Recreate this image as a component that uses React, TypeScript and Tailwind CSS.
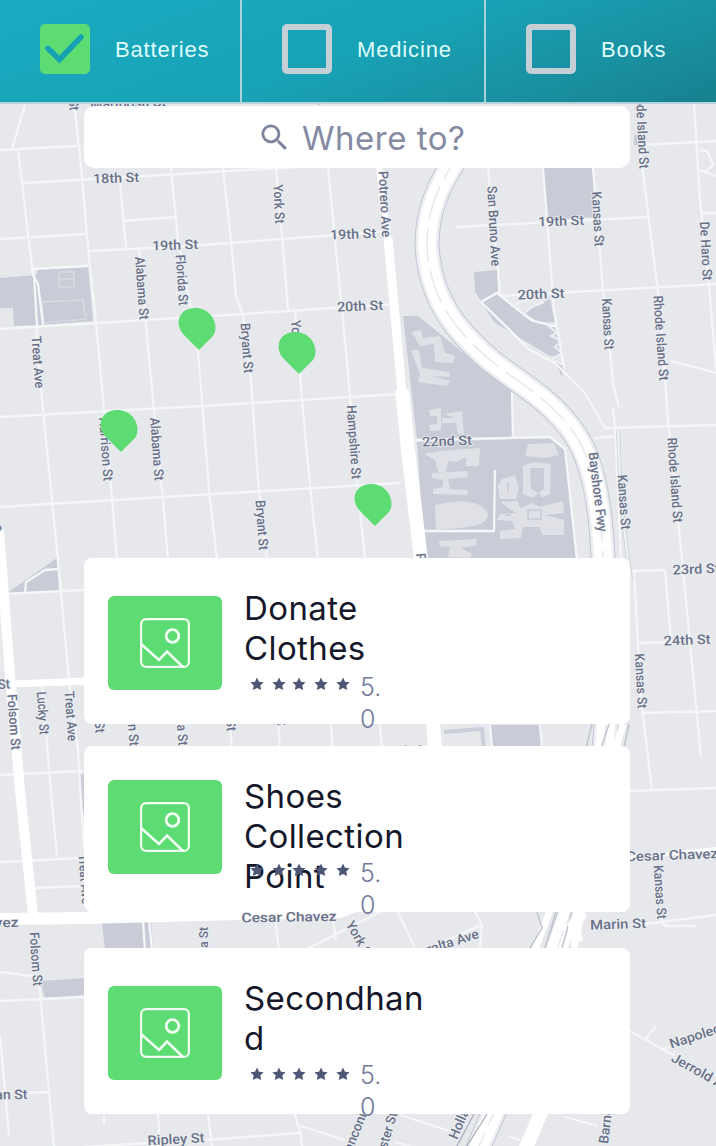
import React from 'react';
import { MdSearch } from 'react-icons/md';

type Label = { t: string; x: number; y: number; r: number; w: number };

const labels: Label[] = [
  { t: 'Mariposa St', x: 128, y: 103, r: -2, w: 76 },
  { t: 'St', x: 74, y: 105, r: 87, w: 11 },
  { t: 'York St', x: 322, y: 85, r: 87, w: 39 },
  { t: '18th St', x: 116, y: 178, r: -2, w: 46 },
  { t: '19th St', x: 175, y: 245, r: -2, w: 46 },
  { t: '19th St', x: 353, y: 234, r: -2, w: 46 },
  { t: '20th St', x: 360, y: 306, r: -2, w: 46 },
  { t: '19th St', x: 561, y: 221, r: -2, w: 46 },
  { t: '20th St', x: 541, y: 294, r: -2, w: 47 },
  { t: '22nd St', x: 447, y: 441, r: -2, w: 50 },
  { t: 'York St', x: 279, y: 204, r: 87, w: 39 },
  { t: 'Potrero Ave', x: 385, y: 204, r: 87, w: 66 },
  { t: 'Florida St', x: 182, y: 280, r: 86, w: 51 },
  { t: 'Alabama St', x: 142, y: 288, r: 86, w: 63 },
  { t: 'Treat Ave', x: 38, y: 362, r: 86, w: 52 },
  { t: 'Bryant St', x: 247, y: 348, r: 86, w: 50 },
  { t: 'York St', x: 297, y: 340, r: 86, w: 40 },
  { t: 'Harrison St', x: 106, y: 449, r: 86, w: 64 },
  { t: 'Alabama St', x: 157, y: 449, r: 86, w: 63 },
  { t: 'Hampshire St', x: 354, y: 442, r: 86, w: 74 },
  { t: 'Bryant St', x: 262, y: 525, r: 86, w: 50 },
  { t: 'Potrero Ave', x: 423, y: 586, r: 86, w: 66 },
  { t: 'San Bruno Ave', x: 494, y: 226, r: 87, w: 80 },
  { t: 'Kansas St', x: 598, y: 219, r: 87, w: 55 },
  { t: 'Kansas St', x: 608, y: 324, r: 87, w: 51 },
  { t: 'Rhode Island St', x: 661, y: 338, r: 86, w: 85 },
  { t: 'Rhode Island St', x: 675, y: 480, r: 86, w: 85 },
  { t: 'Rhode Island St', x: 642, y: 126, r: 87, w: 85 },
  { t: 'De Haro St', x: 706, y: 251, r: 87, w: 59 },
  { t: 'Kansas St', x: 624, y: 502, r: 86, w: 55 },
  { t: 'Bayshore Fwy', x: 598, y: 492, r: 83, w: 80 },
  { t: '23rd St', x: 696, y: 569, r: -2, w: 47 },
  { t: '24th St', x: 687, y: 640, r: -2, w: 47 },
  { t: 'Kansas St', x: 641, y: 681, r: 87, w: 55 },
  { t: 'Cesar Chavez', x: 672, y: 855, r: -2, w: 92 },
  { t: 'Kansas St', x: 660, y: 892, r: 86, w: 54 },
  { t: 'Marin St', x: 618, y: 924, r: -2, w: 56 },
  { t: 'Cesar Chavez', x: 289, y: 917, r: -1, w: 95 },
  { t: 'Cesar Chavez', x: -29, y: 923, r: -1, w: 95 },
  { t: 'York St', x: 360, y: 940, r: 60, w: 42 },
  { t: 'Peralta Ave', x: 445, y: 944, r: -18, w: 70 },
  { t: 'Alabama St', x: 203, y: 958, r: -90, w: 62 },
  { t: 'Folsom St', x: 14, y: 722, r: 86, w: 56 },
  { t: 'Lucky St', x: 43, y: 713, r: 86, w: 43 },
  { t: 'Treat Ave', x: 71, y: 716, r: 86, w: 50 },
  { t: 'Folsom St', x: 36, y: 959, r: 86, w: 54 },
  { t: 'Shotwell St', x: -22, y: 686, r: -4, w: 64 },
  { t: 'e', x: -1, y: 528, r: 86, w: 7 },
  { t: 'Harrison St', x: 98, y: 701, r: 86, w: 64 },
  { t: 'Harrison St', x: 132, y: 714, r: 86, w: 64 },
  { t: 'Alabama St', x: 181, y: 714, r: 86, w: 63 },
  { t: 'Bryant St', x: 230, y: 706, r: 86, w: 50 },
  { t: 'York St', x: 281, y: 706, r: 86, w: 39 },
  { t: '26th St', x: 406, y: 751, r: -2, w: 46 },
  { t: 'Treat Ave', x: 85, y: 879, r: 86, w: 50 },
  { t: 'Franconian St', x: -16, y: 1095, r: -1, w: 87 },
  { t: 'Ripley St', x: 176, y: 1139, r: -3, w: 57 },
  { t: 'Napoleon St', x: 707, y: 1032, r: -18, w: 78 },
  { t: 'Jerrold Ave', x: 704, y: 1074, r: 29, w: 72 },
  { t: 'Barneveld', x: 607, y: 1113, r: -83, w: 62 },
  { t: 'Holladay', x: 463, y: 1114, r: -67, w: 53 },
  { t: 'Foerster St', x: 384, y: 1142, r: -73, w: 62 },
  { t: 'Franconia', x: 354, y: 1134, r: -68, w: 59 },
];

const parks = [
  'M0 278 36 275 38 269 88 266 93 321 42 325 14 326 13 308 0 308Z',
  'M403 316 418 316 512 392 513 438 417 440Z',
  'M417 442 553 438 565 449 577 560 425 560Z',
  'M543 168H593L595 217 547 220Z',
  'M474 272 497 270 498 291 481 301 475 292Z',
  'M481 302 499 293 532 322 555 327 563 355 550 356 495 323Z',
  'M523 312 550 299 555 322 540 323Z',
  'M553 357 563 365 562 377Z',
  'M7 593 57 558 59 592Z',
  'M490 725 541 725 543 747 492 747Z',
  'M80 775 86 774 86 815 82 815Z',
  'M102 922 151 920 153 948 105 950Z',
  'M40 981 86 978 86 995 45 998Z',
  'M634 135 641 135 641 145 634 145Z',
];

const roads = [
  'M25 105 12 149 M18 150 22 183 33 275 38 284 43 325 M0 150 77 146',
  'M75 110 82 177 88 247 96 323 104 410 112 497 117 560 130 740 145 950',
  'M120 183 126 247 M123 221 175 217 M171 168 178 240 197 340 202 400 209 490 217 560 232 750',
  'M139 247 146 325 154 410 163 500 168 560 180 750',
  'M223 168 232 250 236 296 243 315 251 380 258 480 267 560 280 750',
  'M276 168 282 235 288 310 M295 310 302 400 310 485 318 560 333 750',
  'M328 168 336 250 343 320 350 396 358 490 365 560 382 750',
  'M36 325 43 410 57 550 69 680 78 750 84 850',
  'M23 183 180 174 380 162 M0 239 86 234 M89 251 175 247 390 231',
  'M0 329 146 320 288 311 395 304 M32 269 88 266',
  'M0 417 202 406 400 394 M0 507 163 497 400 483 M5 594 84 590',
  'M42 683 49 770 57 857 M0 775 82 771 M0 862 82 858 M34 888 84 886',
  'M0 972 40 977 M0 1001 84 997 M39 982 54 1146 M0 1035 9 1136 M28 1093 49 1092',
  'M149 920 152 950 M275 919 279 950 M333 919 336 940 M305 950 380 912',
  'M398 912 414 946 M475 912 482 925 423 950 M482 925 480 950',
  'M84 1147 150 1143 M206 1140 300 1133 295 1114 M300 1126 345 1140 M158 1114 160 1146 M208 1114 212 1146 M300 1130 302 1146 M104 1114 104 1125',
  'M400 1115 450 1131 M395 1142 415 1148 M565 1117 598 1126 M508 1136 520 1140',
  'M488 168 498 270 500 295 M543 168 554 310 564 368 M593 168 603 290 611 360 613 385 619 407 M613 408 615 427 621 560',
  'M640 150 659 300 668 420 682 560 701 757',
  'M694 104 700 200 709 284 716 370 M700 213H716 M641 145 716 141',
  'M456 227 648 217 M501 296 716 284 M671 361 716 373',
  'M481 302 497 293 531 320 557 327 M481 302 530 350 555 363 585 393 605 428 716 425 M594 438 620 436',
  'M415 440 550 437 565 449 577 560 M513 438 512 392 M424 531 494 531 495 470',
  'M632 571 665 570 M634 571 641 700 652 790 M665 570 671 642 M640 643 665 642 M641 713 716 711 M630 791 716 788',
  'M646 924 716 915 M660 918 665 926 696 926 M630 1031 675 1056 M645 1040 656 1026 M660 1050 670 1047',
  'M700 150 707 151 713 164 704 174 M700 170 716 176',
  'M490 725 492 747 M540 725 542 747 M25 593 26 582 45 570 59 569',
  'M37 326 34 275',
];

const courts = 'M42 302 83 300 86 319 44 323ZM59 272H74V287H59ZM59 279H74';

const buildings = [
  'M411 332 421 330 423 338 440 336 445 353 455 356 453 363 435 362 434 344 420 346Z',
  'M411 350 419 350 422 368 450 372 449 377 431 376 450 381 447 386 418 382 420 374Z',
  'M429 410 441 408 441 430 430 431 429 425 437 424 437 416 430 416Z',
  'M444 414 462 411 464 434 458 434 456 423 442 423 442 418 455 418Z',
  'M424 454 440 451 480 448 479 466 466 466 466 457 456 462 448 461 446 472 438 472 435 460Z',
  'M432 473 467 471 468 477 448 479 450 489 468 490 467 495 433 494 433 489 443 487 443 480 432 478Z',
  'M435 505 C455 500 481 498 488 514 C487 528 466 527 436 530Z',
  'M528 444 554 443 559 455 545 458 525 456Z',
  'M502 479 515 475 519 488 516 499 500 499 498 486Z',
  'M523 466 533 462 551 464 550 494 542 498 539 492 544 489 544 468 530 468 531 489 538 493 533 498 523 494Z',
  'M500 502 518 501 520 508 532 503 540 507 563 501 564 513 545 515 564 520 564 535 542 535 540 527 523 527 521 538 500 539 500 531 515 529 512 521 497 520 500 514 516 513Z',
  'M439 541 476 539 477 545 461 548 472 554 470 558 448 557 450 547 440 546Z',
];

const freeway = 'M462 150 C437 185 427 213 427 244 C429 302 460 334 490 360 C520 384 545 396 568 425 C590 451 600 492 603 557 L608 670 C608 760 592 850 568 920 L508 1080 473 1160';

function CityMap() {
  return (
    <svg className="absolute inset-0" width="716" height="1146" viewBox="0 0 716 1146" aria-hidden="true">
      <rect width="716" height="1146" fill="#e6e8ec" />
      {parks.map((d) => <path key={d} d={d} fill="#c9ccd6" />)}
      {buildings.map((d) => <path key={d} d={d} fill="#dfe1e7" />)}
      <path d="M508 482V491M535 474V484M505 515H511M528 510H541V519H528Z" fill="none" stroke="#cdd0d9" strokeWidth="2" />
      <path d={courts} fill="none" stroke="#d8dae1" strokeWidth="1.5" />
      <path d="M444 732 482 729 484 750" fill="none" stroke="#cdd0d9" strokeWidth="4" />
      <g fill="none" stroke="#f5f6f8" strokeWidth="2.3" strokeLinejoin="round">
        {roads.map((d) => <path key={d} d={d} />)}
      </g>
      <path d="M511 306 521 302 536 297M523 314 532 307 544 302M545 323 557 333 551 336 562 341 555 347 562 353 552 359 563 365" fill="none" stroke="#eff0f3" strokeWidth="2" />
      <g fill="none" stroke="#fff">
        <path d="M379 168 388 240" strokeWidth="6" />
        <path d="M388 238 402 393" strokeWidth="9" />
        <path d="M402 390 408 450 421 560 435 750" strokeWidth="14" />
        <path d="M-1 530 10 675 20 790 33 915" strokeWidth="10" />
        <path d="M10 684 90 681" strokeWidth="7" />
        <path d="M-2 919 84 918 240 914 340 912 420 880" strokeWidth="12" />
        <path d="M630 858 716 849" strokeWidth="4" />
      </g>
      <g fill="none">
        <path d={freeway} stroke="#c3c6d0" strokeWidth="25" />
        <path d={freeway} stroke="#eceef1" strokeWidth="23" />
        <path d={freeway} stroke="#fff" strokeWidth="18" />
        <path d={freeway} stroke="#e6e8ec" strokeWidth="1.5" strokeDasharray="34 9" />
        <path d="M623 724 616 748M583 905 574 948M550 910 535 950M563 910 550 950" stroke="#fff" strokeWidth="7" />
        <path d="M592 724 586 748M609 724 601 748M629 724 624 748M537 912 542 928 530 948M556 912 545 948M572 912 562 948" stroke="#c3c6d0" strokeWidth="1.6" />
        <path d="M582 912 574 925 577 942" stroke="#fff" strokeWidth="12" />
        <path d="M543 1108 525 1150" stroke="#fff" strokeWidth="14" />
        <path d="M618 430 621 500 628 560 631 580" stroke="#cdd0d9" strokeWidth="4" />
        <path d="M618 430 621 500 628 560 631 580" stroke="#eef0f3" strokeWidth="2.4" />
        <path d="M487 1114 467 1146M474 1114 457 1146" stroke="#a8acbb" strokeWidth="1.2" />
      </g>
      <g fill="#697089" stroke="#eef0f3" strokeWidth="1.5" paintOrder="stroke" fontFamily="Roboto, sans-serif" fontSize="13.5" fontWeight="500" textAnchor="middle">
        {labels.map((l, i) => (
          <text key={i} transform={`translate(${l.x} ${l.y}) rotate(${l.r})`} y="4.7" textLength={l.w} lengthAdjust="spacingAndGlyphs">{l.t}</text>
        ))}
      </g>
      {[[179, 308], [279, 332], [101, 410], [355, 484]].map(([x, y]) => (
        <path key={x} transform={`translate(${x} ${y})`} d="M20 42 5 27C-5 17-1 0 16 0C29 0 36.500 10 36.500 20C36.500 24 35 27 33 29Z" fill="#5cdc72" />
      ))}
    </svg>
  );
}

function CategoryTab({ label, checked = false, className = '' }: { label: string; checked?: boolean; className?: string }) {
  return (
    <div className={`flex items-start pt-6 pl-10 ${className}`}>
      {checked ? (
        <span className="size-[50px] shrink-0 rounded-[5px] bg-[#5cdc72]">
          <svg width="50" height="50" viewBox="0 0 50 50" fill="none" stroke="#17a2b4" strokeWidth="5.500"><path d="M8 24.500 19.500 35.500 41 13" strokeLinecap="round" strokeLinejoin="miter" /></svg>
        </span>
      ) : (
        <span className="size-[50px] shrink-0 rounded-[5px] border-6 border-[#c4d0d5]" />
      )}
      <span className="mt-[10px] ml-[25px] font-['Liberation_Sans',sans-serif] text-[22px] leading-8 tracking-[0.85px] text-[#dffcfb]">{label}</span>
    </div>
  );
}

function Picture({ className }: { className: string }) {
  return (
    <div className={`flex h-[94px] w-[114px] shrink-0 items-center justify-center rounded-md bg-[#5cdc72] ${className}`}>
      <svg width="50" height="50" viewBox="0 0 50 50" fill="none" stroke="#f2fff3" strokeWidth="2.200">
        <rect x="1.100" y="1.100" width="47.800" height="47.800" rx="5" />
        <circle cx="32.500" cy="18" r="6.300" strokeWidth="2.800" />
        <path d="M1 26 19 42 27 33.500 43 49" strokeWidth="2.600" />
      </svg>
    </div>
  );
}

function Stars({ className }: { className: string }) {
  return (
    <svg className={`shrink-0 ${className}`} width="104" height="14" viewBox="0 0 104 14" fill="#4e5775">
      {[8, 30, 50, 72, 94].map((x) => (
        <path key={x} transform={`translate(${x} 7)`} d="M0-6.500 2-2.200 6.500-1.700 3.300 1.500 4.200 6 0 4-4.200 6-3.300 1.500-6.500-1.700-2-2.200Z" />
      ))}
    </svg>
  );
}

type PlaceProps = { title: string; className: string; picture: string; stars: string; score: string };

function Place({ title, className, picture, stars, score }: PlaceProps) {
  return (
    <article className={`flex h-[166px] w-[546px] shrink-0 rounded-lg bg-white pl-6 ${className}`}>
      <Picture className={picture} />
      <div className="ml-[22px] flex w-[185px] flex-col pt-[30px]">
        <h2 className="h-20 shrink-0 text-[33px] leading-10 tracking-[0.4px] break-words text-[#15182b]">{title}</h2>
        <div className="flex items-start pl-[5px]">
          <Stars className={stars} />
          <p className={`ml-[7px] w-[25px] text-[25px] leading-8 font-light break-all text-[#73799a] ${score}`}>5.0</p>
        </div>
      </div>
    </article>
  );
}

export default function App() {
  return (
    <div className="relative flex h-[1146px] w-[716px] flex-col overflow-hidden font-[Inter,sans-serif]">
      <CityMap />
      <header className="relative grid h-[104px] shrink-0 grid-cols-[242px_244px_230px] border-b-2 border-[#b5d3da] bg-[linear-gradient(160deg,#1aabc3_0%,#18a2b5_50%,#198fa0_80%,#16808e_100%)]">
        <CategoryTab label="Batteries" checked className="border-r-2 border-[#a9d3da]" />
        <CategoryTab label="Medicine" className="border-r-2 border-[#a9d3da]" />
        <CategoryTab label="Books" />
      </header>
      <main className="relative flex flex-col pt-0.5 pl-[84px]">
        <div className="flex h-[62px] w-[546px] items-center rounded-[10px] bg-white pl-[173px] text-[#7f839b]">
          <MdSearch className="size-[35px] shrink-0" />
          <span className="mt-px ml-[10px] text-[33px] leading-10 tracking-[0.5px] text-[#858aa2]">Where to?</span>
        </div>
        <Place title="Donate Clothes" className="mt-[390px]" picture="mt-[38px]" stars="mt-[9px]" score="mt-[3px]" />
        <Place title="Shoes Collection Point" className="mt-[22px]" picture="mt-[34px]" stars="mt-[7px]" score="mt-px" />
        <Place title="Secondhand" className="mt-9" picture="mt-[38px]" stars="mt-[9px]" score="mt-px" />
      </main>
    </div>
  );
}
